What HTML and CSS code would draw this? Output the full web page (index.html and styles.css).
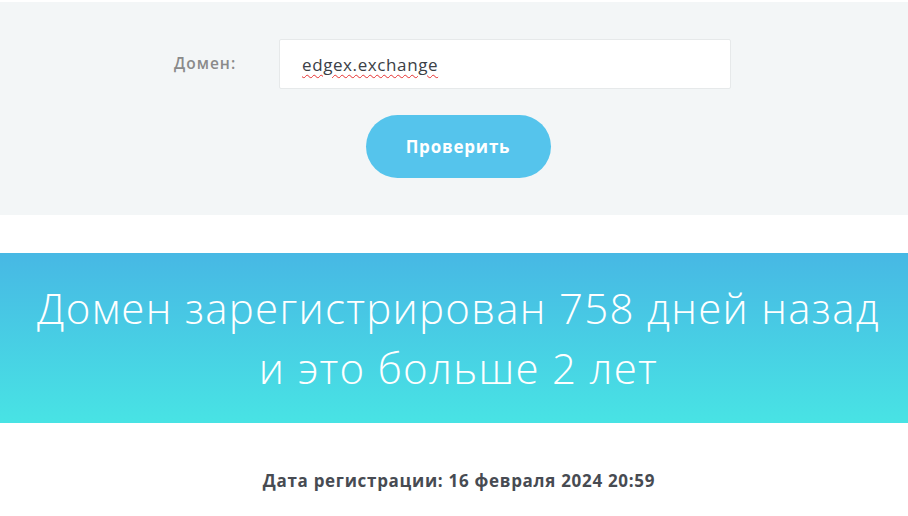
FILE: index.html
```html
<!DOCTYPE html>
<html lang="ru">
<head>
<meta charset="utf-8">
<link rel="stylesheet" href="styles.css">
</head>
<body>
<section class="check">
  <form class="form">
    <div class="row">
      <label class="label" for="domain">Домен:</label>
      <div class="input"><span class="value">edgex.exchange</span></div>
    </div>
    <button type="button" class="btn">Проверить</button>
  </form>
</section>
<section class="result">
  <h1 class="title">Домен зарегистрирован 758 дней назад<br>и это больше 2 лет</h1>
</section>
<section class="info">
  <p class="date">Дата регистрации: 16 февраля 2024 20:59</p>
</section>
</body>
</html>
```
FILE: styles.css
```css
* { box-sizing: border-box; }
body {
  margin: 0;
  font-family: "Open Sans", "Liberation Sans", sans-serif;
  background: #fff;
}
.check {
  margin-top: 2px;
  background: #f3f6f7;
  height: 213px;
  padding-top: 37px;
}
.form {
  display: flex;
  flex-direction: column;
  align-items: center;
}
.row {
  display: flex;
  align-items: center;
  margin-left: -3px;
}
.label {
  width: 105px;
  font-size: 15.5px;
  font-weight: 600;
  letter-spacing: 1px;
  color: #8a8a8a;
  margin-top: -3px;
}
.input {
  width: 452px;
  height: 50px;
  background: #fff;
  border: 1px solid #e6e9ea;
  border-radius: 2px;
  padding-left: 22px;
  display: flex;
  align-items: center;
}
.value {
  font-size: 17px;
  letter-spacing: 0.6px;
  color: #3b4046;
  text-decoration: underline wavy #e53030;
  text-decoration-thickness: 1px;
  text-underline-offset: 3px;
}
.btn {
  margin-top: 26px;
  margin-left: 8px;
  width: 185px;
  height: 63px;
  border: none;
  border-radius: 32px;
  background: #55c4ec;
  color: #fff;
  font-family: inherit;
  font-size: 17px;
  font-weight: 700;
  letter-spacing: 0.8px;
}
.result {
  margin-top: 38px;
  height: 170px;
  padding-left: 9px;
  background: linear-gradient(to bottom, #47b8e4, #48e3e4);
  display: flex;
  align-items: center;
  justify-content: center;
}
.title {
  margin: 0;
  color: #fff;
  font-weight: 300;
  font-size: 42px;
  letter-spacing: 1.3px;
  line-height: 60px;
  text-align: center;
}
.info {
  padding-top: 46px;
  padding-left: 10px;
}
.date {
  margin: 0;
  text-align: center;
  font-size: 17px;
  font-weight: 700;
  letter-spacing: 0.7px;
  color: #474b52;
}
```
